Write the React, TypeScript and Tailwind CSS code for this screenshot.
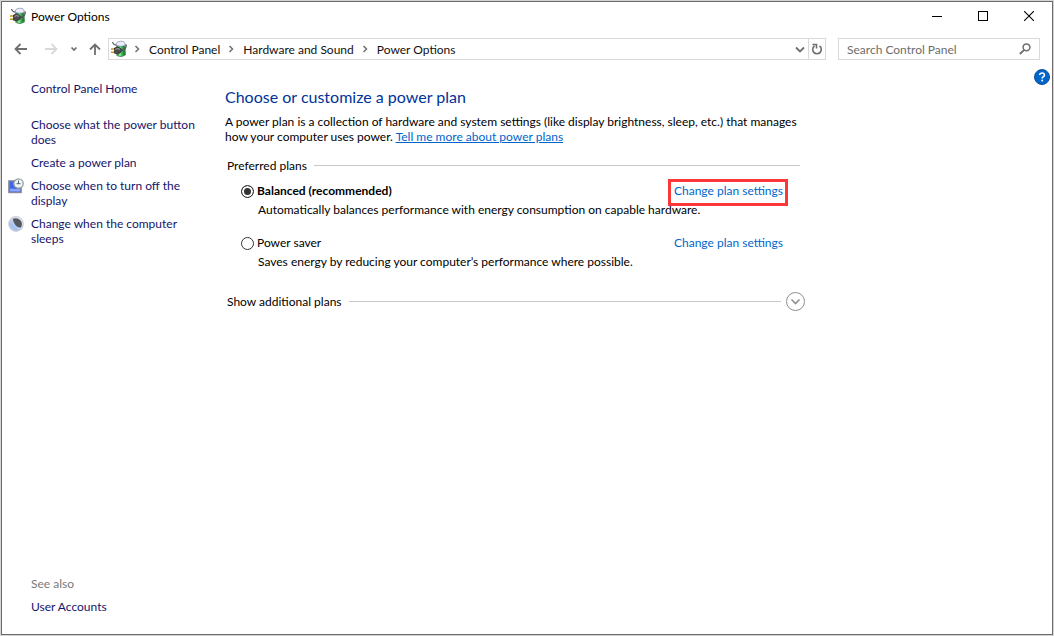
import { useState } from "react";

function BatteryIcon() {
  return (
    <svg width="18" height="18" viewBox="0 0 18 18" aria-hidden="true" className="shrink-0">
      <path d="M6.500 4h8.500l.5 11Q11 18 6.800 15.500Z" fill="#35a84a" stroke="#5b8763" strokeWidth="0.800" />
      <path d="M8.800 6.500h2.500v9.500h-2.500Z" fill="#7fe08c" />
      <path d="M13.200 6v9.500l1.800-.8L14.700 6Z" fill="#1f8036" />
      <path d="M6.300 3.700Q6.500 1.700 10.500 1.200t4.500 2.500L15 5.500Q11 7 6.500 5.500Z" fill="#edf0fc" stroke="#8d94b4" strokeWidth="0.800" />
      <path d="M2.500 2Q3 4.500 6 5.200" fill="none" stroke="#5b5f62" strokeWidth="1.200" />
      <path d="M11.500 10.500q4.800-.5 4.800-6" fill="none" stroke="#55595c" strokeWidth="1.300" />
      <path d="M1 9h4M1 12.200h4" stroke="#c8961e" strokeWidth="1.600" />
      <path d="M4.500 8 7.500 7Q11 7.500 12 10.300q-1 3-4.500 3.500L4.500 13.200Z" fill="#4b4b4f" stroke="#2b2b2b" strokeWidth="0.700" />
      <path d="M5.500 9.300q2.500-1.300 4.500 0" fill="none" stroke="#a8a8ae" strokeWidth="1" />
    </svg>
  );
}

function Crumb({ label }: { label: string }) {
  return (
    <>
      <svg width="15" height="10" viewBox="0 0 15 10" aria-hidden="true" className="shrink-0">
        <path d="m5.500 2 3 3-3 3" fill="none" stroke="#707070" strokeWidth="1.500" />
      </svg>
      <a href="#" className="px-1 whitespace-nowrap text-[#111]">
        {label}
      </a>
    </>
  );
}

function DisplayClockIcon() {
  return (
    <svg width="16" height="16" viewBox="0 0 16 16" aria-hidden="true" className="shrink-0">
      <rect x="0.900" y="2.900" width="12.200" height="11.600" fill="#3f66e6" stroke="#85879a" strokeWidth="1.400" />
      <path d="M2 10.500 8 11l4-.5v3H2Z" fill="#88a5f8" />
      <circle cx="10.500" cy="5.500" r="4.700" fill="#f0f4f4" stroke="#979ca0" strokeWidth="1.300" />
      <path d="M10.500 2.500V6M8.500 5.700h4" fill="none" stroke="#4e6d7d" strokeWidth="1" />
    </svg>
  );
}

function MoonIcon() {
  return (
    <svg width="16" height="16" viewBox="0 0 16 16" aria-hidden="true" className="shrink-0">
      <defs>
        <linearGradient id="moon" x1="1" y1="0" x2="0" y2="1">
          <stop offset="0.300" stopColor="#e4e9f2" />
          <stop offset="0.700" stopColor="#a3bfee" />
          <stop offset="1" stopColor="#c9daf6" />
        </linearGradient>
      </defs>
      <circle cx="8" cy="8" r="7.300" fill="url(#moon)" stroke="#ccd0d6" strokeWidth="1.200" />
      <path d="M4.800 2.800Q9.500 1.200 12.300 4.200t.9 7Q10 12 7.500 9.200T4.800 2.800Z" fill="#55585e" />
    </svg>
  );
}

function Plan(props: {
  id: string;
  name: string;
  description: string;
  selected: boolean;
  highlighted?: boolean;
  onSelect: () => void;
}) {
  return (
    <div className="flex flex-col gap-1 pl-4">
      <div className="flex items-end justify-between pr-[22px]">
        <div className="flex items-end gap-[3px]">
          <input
            id={props.id}
            type="radio"
            name="plan"
            checked={props.selected}
            onChange={props.onSelect}
            className="size-[13px] appearance-none rounded-full border border-[#333] bg-white checked:bg-[#333] checked:shadow-[inset_0_0_0_2px_white]"
          />
          <label htmlFor={props.id} className={props.selected ? "font-bold" : ""}>
            {props.name}
          </label>
        </div>
        <div className="relative">
          <a href="#" className="text-[#0066cc]">
            Change plan settings
          </a>
          {props.highlighted && (
            <span className="pointer-events-none absolute -top-1 -right-[5px] -bottom-2 -left-[6px] border-3 border-[#fb3737]" />
          )}
        </div>
      </div>
      <p className="pl-[17px]">{props.description}</p>
    </div>
  );
}

export default function App() {
  const [plan, setPlan] = useState("balanced");
  return (
    <div className="flex min-h-screen flex-col bg-[#d4d4d4] p-px font-['Lato','Open_Sans',sans-serif] text-[12px] leading-[15px] text-black">
      <div className="flex flex-1 flex-col border border-[#6b6b6b] bg-white">
        <header className="flex h-7 items-center pl-[7px]">
          <BatteryIcon />
          <h1 className="flex-1 pl-1">Power Options</h1>
          <button aria-label="Minimize" className="flex h-full w-[46px] items-center justify-center">
            <svg width="10" height="10" viewBox="0 0 10 10">
              <path d="M0 5.500h10" stroke="#000" />
            </svg>
          </button>
          <button aria-label="Maximize" className="flex h-full w-[46px] items-center justify-center">
            <svg width="10" height="10" viewBox="0 0 10 10">
              <rect x="0.500" y="0.500" width="9" height="9" fill="none" stroke="#000" />
            </svg>
          </button>
          <button aria-label="Close" className="flex h-full w-[46px] items-center justify-center">
            <svg width="10" height="10" viewBox="0 0 10 10">
              <path d="m0 0 10 10M10 0 0 10" stroke="#000" strokeWidth="1.100" />
            </svg>
          </button>
        </header>

        <nav aria-label="Address" className="flex h-[38px] items-center pr-3 pl-3">
          <button aria-label="Back" className="mr-4">
            <svg width="14" height="12" viewBox="0 0 14 12" fill="none" stroke="#6e6e6e" strokeWidth="1.800">
              <path d="M1.500 6H13M6.500 1l-5 5 5 5" />
            </svg>
          </button>
          <button aria-label="Forward" className="mr-3">
            <svg width="14" height="12" viewBox="0 0 14 12" fill="none" stroke="#d9d9d9" strokeWidth="1.800">
              <path d="M1 6h11.500M7.500 1l5 5-5 5" />
            </svg>
          </button>
          <button aria-label="Recent locations" className="mr-[11px]">
            <svg width="8" height="6" viewBox="0 0 8 6" fill="none" stroke="#6e6e6e" strokeWidth="1.700">
              <path d="m1.500 1.500 2.500 2.500 2.500-2.500" />
            </svg>
          </button>
          <button aria-label="Up" className="mr-[7px]">
            <svg width="12" height="12" viewBox="0 0 12 12" fill="none" stroke="#6e6e6e" strokeWidth="1.800">
              <path d="M6 12V1.500M1 6.500l5-5 5 5" />
            </svg>
          </button>
          <div className="mr-3 flex h-[22px] min-w-0 flex-1 items-center border border-[#d9d9d9]">
            <div className="flex flex-1 items-center pl-px">
              <span className="mr-[2px]">
                <BatteryIcon />
              </span>
              <Crumb label="Control Panel" />
              <Crumb label="Hardware and Sound" />
              <Crumb label="Power Options" />
            </div>
            <button aria-label="Previous locations" className="flex h-full w-4 items-center justify-center">
              <svg width="10" height="7" viewBox="0 0 10 7" fill="none" stroke="#6e6e6e" strokeWidth="1.800">
                <path d="m1 1.500 4 4 4-4" />
              </svg>
            </button>
            <button aria-label="Refresh" className="flex h-full w-[17px] items-center justify-center border-l border-[#d9d9d9]">
              <svg width="12" height="12" viewBox="0 0 12 12" fill="none" stroke="#6e6e6e" strokeWidth="1.600">
                <path d="M8.500 3A4.300 4.300 0 1 1 3.500 3M1.500 1.500h4V5.500" />
              </svg>
            </button>
          </div>
          <div className="flex h-[22px] w-[202px] items-center border border-[#d9d9d9] pr-2 pl-2">
            <input
              type="search"
              aria-label="Search Control Panel"
              placeholder="Search Control Panel"
              className="min-w-0 flex-1 outline-none placeholder:text-[#6d6d6d]"
            />
            <button aria-label="Search">
              <svg width="12" height="12" viewBox="0 0 12 12" fill="none" stroke="#6e6e6e">
                <circle cx="7.500" cy="4.300" r="3.400" strokeWidth="1.500" />
                <path d="M5.200 6.800.8 11" strokeWidth="1.800" />
              </svg>
            </button>
          </div>
        </nav>

        <div className="flex flex-1">
          <aside className="flex w-[223px] shrink-0 flex-col pt-[13px] pr-5 pb-5 pl-[6px] text-[#15156b]">
            <a href="#" className="pl-[23px]">
              Control Panel Home
            </a>
            <ul className="mt-[21px] flex flex-col gap-2">
              <li className="pl-[23px]">
                <a href="#">
                  Choose what the power button
                  <br />
                  does
                </a>
              </li>
              <li className="pl-[23px]">
                <a href="#">Create a power plan</a>
              </li>
              <li className="flex gap-[7px]">
                <DisplayClockIcon />
                <a href="#">
                  Choose when to turn off the
                  <br />
                  display
                </a>
              </li>
              <li className="flex gap-[7px]">
                <MoonIcon />
                <a href="#">
                  Change when the computer
                  <br />
                  sleeps
                </a>
              </li>
            </ul>
            <div className="mt-auto flex flex-col gap-2 pl-[23px]">
              <h2 className="text-[#7a7a7a]">See also</h2>
              <a href="#">User Accounts</a>
            </div>
          </aside>

          <main className="w-full max-w-[580px] pt-[19px]">
            <h2 className="text-[16px] leading-[20px] text-[#003399]">Choose or customize a power plan</h2>
            <p className="mt-[7px]">
              A power plan is a collection of hardware and system settings (like display brightness, sleep, etc.) that manages
              how your computer uses power.{" "}
              <a href="#" className="text-[#0066cc] underline">
                Tell me more about power plans
              </a>
            </p>
            <section className="mt-[14px]">
              <div className="flex items-center gap-[7px] pr-[5px] pl-[2px]">
                <h3 id="preferred-plans">Preferred plans</h3>
                <span className="h-px flex-1 bg-[#c8c8c8]" />
              </div>
              <div role="radiogroup" aria-labelledby="preferred-plans" className="mt-[10px] flex flex-col gap-[18px]">
                <Plan
                  id="balanced"
                  name="Balanced (recommended)"
                  description="Automatically balances performance with energy consumption on capable hardware."
                  selected={plan === "balanced"}
                  highlighted
                  onSelect={() => setPlan("balanced")}
                />
                <Plan
                  id="saver"
                  name="Power saver"
                  description="Saves energy by reducing your computer’s performance where possible."
                  selected={plan === "saver"}
                  onSelect={() => setPlan("saver")}
                />
              </div>
            </section>
            <button className="mt-[23px] flex w-full items-center pl-[2px] text-left">
              <span>Show additional plans</span>
              <span className="mr-[5px] ml-[7px] h-px flex-1 bg-[#c8c8c8]" />
              <svg width="19" height="19" viewBox="0 0 19 19" fill="none" stroke="#8f8f8f">
                <circle cx="9.500" cy="9.500" r="9" />
                <path d="m5.500 7.500 4 4 4-4" strokeWidth="1.600" />
              </svg>
            </button>
          </main>
          <div className="ml-auto pt-px pr-[2px]">
            <button aria-label="Help" className="block">
              <svg width="16" height="16" viewBox="0 0 16 16">
                <circle cx="8" cy="8" r="7.500" fill="#0066cc" stroke="#124f91" />
                <path d="M5.700 6Q5.900 4 8.100 4t2.300 1.900Q10.400 7 9.200 7.800 8.200 8.400 8.200 9.400" fill="none" stroke="#fff" strokeWidth="1.600" />
                <circle cx="8.200" cy="11.600" r="1" fill="#fff" />
              </svg>
            </button>
          </div>
        </div>
      </div>
    </div>
  );
}
